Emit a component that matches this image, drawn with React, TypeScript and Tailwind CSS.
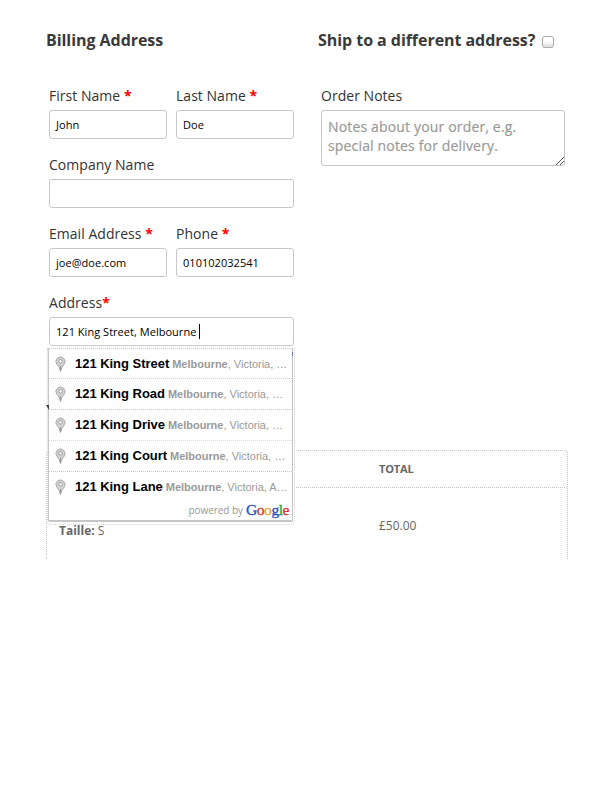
import React from "react";

const suggestions = [
  { street: "121 King Street", rest: ", Victoria, …" },
  { street: "121 King Road", rest: ", Victoria, …" },
  { street: "121 King Drive", rest: ", Victoria, …" },
  { street: "121 King Court", rest: ", Victoria, …" },
  { street: "121 King Lane", rest: ", Victoria, A…" },
];

function Label({ text, required, tight }: { text: string; required?: boolean; tight?: boolean }) {
  return (
    <div className="h-5 whitespace-pre text-[14px] leading-5 tracking-[0.03px] text-[#333]">
      {text}
      {required && <b className="text-[#f00]">{tight ? "*" : " *"}</b>}
    </div>
  );
}

function Field({ label, value, required, tight, caret }: { label: string; value?: string; required?: boolean; tight?: boolean; caret?: boolean }) {
  return (
    <div className="h-[69px] min-w-0 flex-1">
      <Label text={label} required={required} tight={tight} />
      <div className="mt-1 flex h-[29px] items-center whitespace-pre rounded-[3px] border border-[#c8c8c8] bg-white px-1.5 pt-0.5 text-[11px] tracking-[0.03px] text-black">
        {value}
        {caret && <i className="-mt-0.5 ml-[3px] h-[15px] w-px bg-black" />}
      </div>
    </div>
  );
}

function Pin() {
  return (
    <svg className="ml-[6px] mr-[9px] h-4 w-[11px] shrink-0" viewBox="0 0 11 16" fill="none">
      <path d="M5.5 15.5 4 11 2 8.4A4.5 4.5 0 1 1 9 8.4L7 11Z" fill="#d2d2d2" stroke="#aaa" strokeWidth="1" />
      <circle cx="5.5" cy="5.3" r="1.8" fill="#fff" stroke="#a0a0a0" strokeWidth="1" />
      <path d="M5.5 10v5" stroke="#999" />
    </svg>
  );
}

function Suggestions() {
  return (
    <div className="absolute left-[-1px] top-px z-10 h-[175px] w-[245px]">
      <div className="absolute -bottom-[2px] -left-px -right-[2px] top-0 rounded-b-[4px] border border-dotted border-[#d0d0d0] bg-white" />
      <div className="relative h-[174px] rounded-b-[2px] border border-b-2 border-t-0 border-[#c6c6c6] bg-white bg-clip-padding font-['Liberation_Sans',sans-serif]">
        <div className="h-px border-t border-dotted border-[#c8c8c8]" />
        {suggestions.map((s, i) => (
          <div key={s.street} className={"flex items-center whitespace-pre border-dotted border-[#c8c8c8] " + (i === 0 ? "h-[30px] border-b" : i === 2 ? "h-[31px] border-b border-[#f4c8c8]" : i < 4 ? "h-[31px] border-b" : "h-[30px]")}>
            <Pin />
            <b className="text-[13px] tracking-[-0.03px] text-black">{s.street}</b>
            <span className="ml-[3px] pt-px text-[11px] tracking-[-0.01px] text-[#999]">
              <b>Melbourne</b>
              {s.rest}
            </span>
          </div>
        ))}
        <div className="flex h-[16px] items-center justify-end pr-[3px]">
          <span className="mr-[3px] font-['Open_Sans',sans-serif] text-[10px] tracking-[-0.05px] text-[#999]">powered by</span>
          <span className="font-['Liberation_Serif',serif] text-[15.5px] leading-[16px] tracking-[-0.45px] [-webkit-text-stroke:0.35px_currentColor]">
            <span className="text-[#1f50c8]">G</span>
            <span className="text-[#dc3030]">o</span>
            <span className="text-[#e9a820]">o</span>
            <span className="text-[#1f50c8]">g</span>
            <span className="text-[#2ba24c]">l</span>
            <span className="text-[#dc3030]">e</span>
          </span>
        </div>
      </div>
    </div>
  );
}

export default function App() {
  return (
    <main className="h-[807px] w-[616px] overflow-hidden bg-white pl-[46px] pt-7 font-['Open_Sans',sans-serif]">
      <div className="flex h-[422px]">
        <section className="w-[248px]">
          <h2 className="h-[58px] whitespace-nowrap text-[16px] font-bold leading-6 tracking-[-0.05px] text-[#3a3a3a]">Billing Address</h2>
          <div className="pl-[3px]">
            <div className="flex gap-[9px]">
              <Field label="First Name" value="John" required />
              <Field label="Last Name" value="Doe" required />
            </div>
            <Field label="Company Name" />
            <div className="flex gap-[9px]">
              <Field label="Email Address" value="joe@doe.com" required />
              <Field label="Phone" value="010102032541" required />
            </div>
            <Field label="Address" value="121 King Street, Melbourne" required tight caret />
            <div className="relative -mt-[15px] h-0">
              <Suggestions />
              <i className="absolute -left-[3px] top-[58px] z-20 h-[5px] w-[3px] bg-[#443a3a] [clip-path:polygon(0_0,100%_0,100%_100%)]" />
              <i className="absolute left-[243px] top-[5px] z-20 h-[4px] w-px bg-[#6674a8]" />
            </div>
          </div>
        </section>
        <section className="ml-6 w-[247px]">
          <h2 className="flex h-[58px] whitespace-nowrap text-[16px] font-bold leading-6 tracking-[-0.05px] text-[#3a3a3a]">
            Ship to a different address?
            <i className="ml-[7px] mt-2 h-3 w-3 rounded-[3px] border border-[#aaa] bg-linear-to-b from-white from-40% to-[#ddd]" />
          </h2>
          <div className="pl-[3px]">
            <Label text="Order Notes" />
            <div className="relative mt-1 h-14 whitespace-nowrap rounded-[3px] border border-[#c8c8c8] px-1.5 pt-[6px] text-[14px] leading-[19px] tracking-[0.16px] text-[#999] [-webkit-text-stroke:0.2px_currentColor]">
              Notes about your order, e.g.
              <br />
              special notes for delivery.
              <svg className="absolute bottom-0 right-0 h-2 w-2" viewBox="0 0 8 8" stroke="#555">
                <path d="M0 8 8 0M4 8 8 4" />
              </svg>
            </div>
          </div>
        </section>
      </div>
      <section className="h-[109px] w-[522px] rounded-t-[4px] border border-b-0 border-dotted border-[#c4c4c4] text-[12px] text-[#666]">
        <div className="flex h-[37px] items-center border-b border-dotted border-[#c4c4c4] pl-[332px] text-[11px] font-bold tracking-[-0.15px]">TOTAL</div>
        <div className="flex">
          <div className="w-[332px] pl-3 pt-[35px] leading-4"><b>Taille:</b> S</div>
          <div className="pt-[30px] leading-4">£50.00</div>
        </div>
      </section>
    </main>
  );
}
